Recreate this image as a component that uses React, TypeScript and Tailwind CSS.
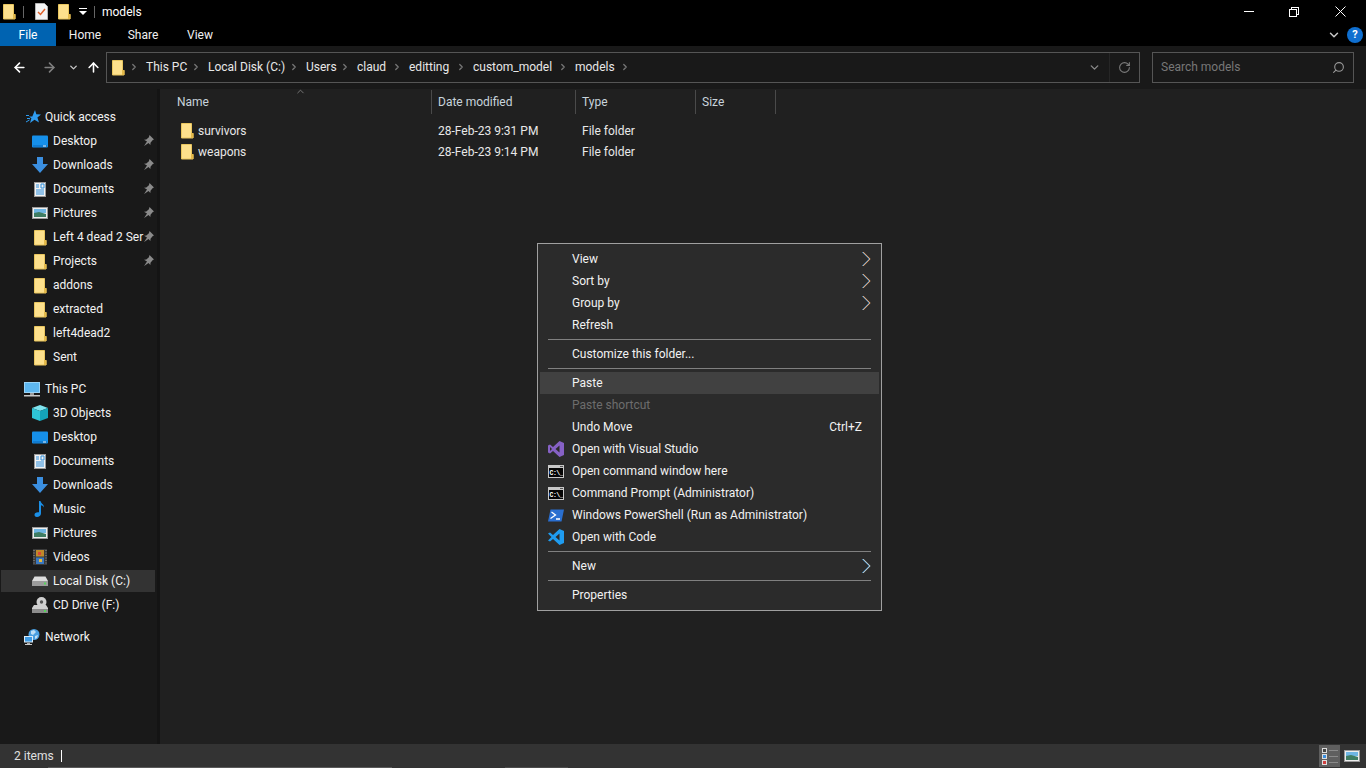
import React from 'react';
import { ArrowLeft, ArrowRight, ArrowUp, ChevronDown, ChevronRight, ChevronUp, RotateCw, Search } from 'lucide-react';

const Folder = ({ className = '' }: { className?: string }) => (
  <svg width="14" height="17" viewBox="0 0 14 17" className={className}>
    <path d="M1.5 1.5h10v10h1.5v4.5H1.5z" fill="#fde08c" stroke="#e9c65f" />
    <path d="M11 11h2.5v5H11z" fill="#e3b94a" />
  </svg>
);

const Pin = () => (
  <svg width="11" height="11" viewBox="0 0 11 11">
    <path d="M6.500 0l4.500 4.500-1.200.6-2.300 2.600-.1 2.300-1.900-1.900-4.500 3 3-4.500L1 4.700l2.300-.1L5.900 2.300z" fill="#8a8a8a" />
  </svg>
);

const Desktop = () => (
  <svg width="16" height="13" viewBox="0 0 16 13">
    <rect x="0" y="0.5" width="16" height="12" rx="1" fill="#1690ea" />
    <rect x="1" y="10.5" width="14" height="1" fill="#0a66b8" />
    <rect x="11" y="10.5" width="3" height="1" fill="#e6f3ff" />
  </svg>
);

const Download = () => (
  <svg width="16" height="16" viewBox="0 0 16 16">
    <path d="M5 0h6v7h5l-8 9-8-9h5z" fill="#3b8fe0" />
  </svg>
);

const Documents = () => (
  <svg width="12" height="15" viewBox="0 0 12 15">
    <rect x="0.5" y="0.5" width="11" height="14" fill="#f2f2f2" stroke="#9a9a9a" />
    <path d="M2 3h3M2 5h3M7 2h3v4H7zM2 8h8M2 10h8M2 12h8" stroke="#2f8fdc" fill="none" />
  </svg>
);

const Pictures = () => (
  <svg width="16" height="12" viewBox="0 0 16 12">
    <rect x="0.5" y="0.5" width="15" height="11" fill="#eeeeee" stroke="#9a9a9a" />
    <rect x="2" y="2" width="12" height="4" fill="#6fb6e4" />
    <path d="M2 6l5-1 7 2v3H2z" fill="#3f7d63" />
  </svg>
);

const Cube = () => (
  <svg width="16" height="16" viewBox="0 0 16 16">
    <path d="M8 0l8 3-8 3-8-3z" fill="#7fe3ee" />
    <path d="M0 3l8 3v10l-8-3z" fill="#2ec4d6" />
    <path d="M16 3L8 6v10l8-3z" fill="#14a3b8" />
  </svg>
);

const Music = () => (
  <svg width="12" height="16" viewBox="0 0 12 16">
    <path d="M5 0h1.500c.3 2.500 3.500 3 3.500 6.500-.8-1.500-2-2-3-2.200V12.500C7 14.500 5 16 3 16s-2.500-1.200-2.500-2.300C.5 12 2.500 10.800 5 11.300z" fill="#1b8fe6" />
  </svg>
);

const Videos = () => (
  <svg width="14" height="16" viewBox="0 0 14 16">
    <rect width="14" height="16" fill="#3a3a3a" />
    <rect x="3" y="1" width="8" height="6.500" fill="#c08a2a" />
    <rect x="3" y="8.500" width="8" height="6.500" fill="#3a78c0" />
    <rect x="5" y="3" width="3" height="3" fill="#d9483a" />
    <rect x="6" y="10" width="3" height="3" fill="#e6b93a" />
    <path d="M1 1v14M13 1v14" stroke="#999" strokeDasharray="1 1.500" />
  </svg>
);

const Drive = () => (
  <svg width="16" height="10" viewBox="0 0 16 10">
    <path d="M2.500 0.500h11L16 5v5H0V5z" fill="#dcdcdc" />
    <rect x="0" y="5" width="16" height="5" fill="#9c9c9c" />
    <rect x="12" y="6.500" width="2" height="2" fill="#55d35a" />
  </svg>
);

const CdDrive = () => (
  <svg width="16" height="16" viewBox="0 0 16 16">
    <circle cx="9.500" cy="5" r="5" fill="#d0d0d0" />
    <circle cx="9.500" cy="5" r="1.700" fill="#555" />
    <path d="M2 8h12l2 3v5H0v-5z" fill="#cfcfcf" />
    <rect x="0" y="12" width="16" height="4" fill="#8c8c8c" />
    <rect x="12" y="13" width="2" height="2" fill="#55d35a" />
  </svg>
);

const ThisPc = () => (
  <svg width="16" height="15" viewBox="0 0 16 15">
    <rect x="0" y="0" width="16" height="11" fill="#9ad4f7" />
    <rect x="1" y="1" width="14" height="9" fill="#5db7f0" />
    <rect x="6" y="11" width="4" height="2" fill="#9a9a9a" />
    <rect x="0" y="13" width="16" height="1.500" fill="#c8c8c8" />
  </svg>
);

const Network = () => (
  <svg width="16" height="16" viewBox="0 0 16 16">
    <circle cx="10" cy="5.500" r="5.500" fill="#4a9fe0" />
    <path d="M7 2l3-1 2 2-3 3-2-1zM11 7l3-1-1 3-2 1z" fill="#bfe0f5" />
    <rect x="0" y="7" width="9" height="6.500" fill="#dcecf8" />
    <rect x="1" y="8" width="7" height="4.500" fill="#3f9be4" />
    <rect x="3" y="14" width="3" height="1" fill="#aaa" />
    <rect x="1" y="15" width="7" height="1" fill="#ccc" />
  </svg>
);

const Star = () => (
  <svg width="15" height="14" viewBox="0 0 15 14">
    <path d="M9 0l1.300 4.200L15 4.400l-3.600 3L13 12.500 8.500 9.800 4 13l1.400-4.700-2.400-1.800h3.300z" fill="#2f9cf0" />
    <path d="M0 5.500h3M1 8.500h3M0 12l3.500-2" stroke="#2f9cf0" />
  </svg>
);

const DocCheck = ({ className = '' }: { className?: string }) => (
  <svg width="13" height="17" viewBox="0 0 13 17" className={className}>
    <path d="M0.500 0.500h9l3 3v13H0.500z" fill="#f4f4f4" stroke="#b5b5b5" />
    <path d="M3 9l2.500 2.500L10 6" stroke="#e0622c" strokeWidth="1.500" fill="none" />
  </svg>
);

const Cmd = () => (
  <svg width="16" height="13" viewBox="0 0 16 13">
    <rect width="16" height="13" fill="#c8c8c8" />
    <rect x="12" y="1" width="3" height="1" fill="#555" />
    <rect x="1" y="3" width="14" height="9" fill="#050505" />
    <text x="1.500" y="10" fontSize="6.500" fontWeight="700" fill="#ffffff" fontFamily="'Liberation Mono', monospace" letterSpacing="-0.500">C:\_</text>
  </svg>
);

const PowerShell = () => (
  <svg width="16" height="13" viewBox="0 0 16 13">
    <path d="M2.500 0.500H16L13.500 12.500H0z" fill="#2a6fd0" />
    <path d="M3.500 3l4 3-5 3.500M8 10h4" stroke="#ffffff" strokeWidth="1.300" fill="none" />
  </svg>
);

const VisualStudio = () => (
  <svg width="16" height="16" viewBox="0 0 16 16">
    <path d="M11.500 0L16 2v12l-4.500 2L5 10l-3 2.500L0 11.500v-7L2 3.500 5 6zM2 6v4l2-2zM11.500 4.500L7.500 8l4 3.500z" fill="#8661c5" fillRule="evenodd" />
  </svg>
);

const VsCode = () => (
  <svg width="16" height="16" viewBox="0 0 16 16">
    <path d="M11.500 0L16 2v12l-4.500 2L5 10l-3 2.500L0 11.500 3.500 8 0 4.500 2 3.500 5 6zM11.500 4.500L7.500 8l4 3.500z" fill="#1f9cf0" fillRule="evenodd" />
  </svg>
);

const quickItems = [
  { name: 'Desktop', icon: <Desktop />, pin: true },
  { name: 'Downloads', icon: <Download />, pin: true },
  { name: 'Documents', icon: <Documents />, pin: true },
  { name: 'Pictures', icon: <Pictures />, pin: true },
  { name: 'Left 4 dead 2 Ser', icon: <Folder />, pin: true },
  { name: 'Projects', icon: <Folder />, pin: true },
  { name: 'addons', icon: <Folder /> },
  { name: 'extracted', icon: <Folder /> },
  { name: 'left4dead2', icon: <Folder /> },
  { name: 'Sent', icon: <Folder /> },
];

const pcItems = [
  { name: '3D Objects', icon: <Cube /> },
  { name: 'Desktop', icon: <Desktop /> },
  { name: 'Documents', icon: <Documents /> },
  { name: 'Downloads', icon: <Download /> },
  { name: 'Music', icon: <Music /> },
  { name: 'Pictures', icon: <Pictures /> },
  { name: 'Videos', icon: <Videos /> },
  { name: 'Local Disk (C:)', icon: <Drive />, selected: true },
  { name: 'CD Drive (F:)', icon: <CdDrive /> },
];

const crumbs = [
  { name: 'This PC', width: 'w-[62px]' },
  { name: 'Local Disk (C:)', width: 'w-[98px]' },
  { name: 'Users', width: 'w-[51px]' },
  { name: 'claud', width: 'w-[52px]' },
  { name: 'editting', width: 'w-[64px]' },
  { name: 'custom_model', width: 'w-[102px]' },
  { name: 'models', width: 'w-[62px]' },
];

const SideRow = ({ item }: { item: { name: string; icon: React.ReactNode; pin?: boolean; selected?: boolean } }) => (
  <div className="h-6 pl-[1px] pr-[2px] flex items-center">
    <div className={`h-[22px] flex-1 flex items-center pl-[31px] relative ${item.selected ? 'bg-[#333333]' : ''}`}>
      <span className="w-[22px] shrink-0 flex items-center justify-center -ml-[1px] pr-[5px]">{item.icon}</span>
      <span className="text-[#f2f2f2] whitespace-nowrap">{item.name}</span>
      {item.pin && (
        <span className="absolute right-[1px] top-[5px]">
          <Pin />
        </span>
      )}
    </div>
  </div>
);

const Arrow = ({ warm }: { warm?: boolean }) => (
  <svg width="9" height="16" viewBox="0 0 9 16" className="ml-auto">
    <path d="M0.400 1l7 7-7 7" stroke="#3f9fe6" fill="none" />
    <path d="M1.200 1l7 7-7 7" stroke={warm ? '#f09a58' : '#b8c8c8'} fill="none" />
    <path d="M0.800 1l7 7-7 7" stroke="#f4e8dc" fill="none" strokeOpacity="0.450" strokeWidth="0.700" />
  </svg>
);

const MenuRow = ({ label, icon, hint, arrow, warm, disabled, active }: {
  label: string; icon?: React.ReactNode; hint?: string; arrow?: boolean; warm?: boolean; disabled?: boolean; active?: boolean;
}) => (
  <div className={`h-[22px] mx-[2px] pl-[8px] pr-[8px] flex items-center ${active ? 'bg-[#414141]' : ''}`}>
    <span className="w-4 h-4 flex items-center justify-center shrink-0">{icon}</span>
    <span className={`ml-2 ${disabled ? 'text-[#6d6d6d]' : 'text-[#f2f2f2]'}`}>{label}</span>
    {hint && <span className="ml-auto mr-[9px] text-[#f2f2f2]">{hint}</span>}
    {arrow && <Arrow warm={warm} />}
  </div>
);

const MenuLine = () => (
  <div className="h-[7px] flex items-center mx-[10px]">
    <div className="h-px w-full bg-[#808080]" />
  </div>
);

const ContextMenu = () => (
  <div className="absolute left-[537px] top-[243px] w-[345px] border border-[#a0a0a0] bg-[#2b2b2b] py-1">
    <MenuRow label="View" arrow warm />
    <MenuRow label="Sort by" arrow warm />
    <MenuRow label="Group by" arrow warm />
    <MenuRow label="Refresh" />
    <MenuLine />
    <MenuRow label="Customize this folder..." />
    <MenuLine />
    <MenuRow label="Paste" active />
    <MenuRow label="Paste shortcut" disabled />
    <MenuRow label="Undo Move" hint="Ctrl+Z" />
    <MenuRow label="Open with Visual Studio" icon={<VisualStudio />} />
    <MenuRow label="Open command window here" icon={<Cmd />} />
    <MenuRow label="Command Prompt (Administrator)" icon={<Cmd />} />
    <MenuRow label="Windows PowerShell (Run as Administrator)" icon={<PowerShell />} />
    <MenuRow label="Open with Code" icon={<VsCode />} />
    <MenuLine />
    <MenuRow label="New" arrow />
    <MenuLine />
    <MenuRow label="Properties" />
  </div>
);

const HeaderCell = ({ label, width }: { label: string; width: string }) => (
  <div className={`${width} h-6 flex items-center pl-[6px] border-r border-[#4a4a4a] text-[#c8d4dc]`}>{label}</div>
);

const FileRow = ({ name, date }: { name: string; date: string }) => (
  <div className="h-[21px] flex items-center text-[#e8e8e8]">
    <div className="w-[272px] pl-[20px] flex items-center">
      <Folder />
      <span className="ml-[4px]">{name}</span>
    </div>
    <div className="w-[144px] pl-[6px]">{date}</div>
    <div className="pl-[6px]">File folder</div>
  </div>
);

export default function App() {
  return (
    <div className="relative w-[1366px] h-[768px] overflow-hidden flex flex-col bg-black text-[12px] leading-4 text-white font-['Roboto',sans-serif]">
      {/* title bar */}
      <div className="h-[23px] flex items-center shrink-0">
        <Folder className="ml-[2px]" />
        <div className="ml-[7px] w-px h-3 bg-[#666]" />
        <DocCheck className="ml-[11px]" />
        <Folder className="ml-[9px]" />
        <div className="ml-2 w-2 flex flex-col items-center gap-[2px]">
          <div className="w-[8px] h-px bg-white" />
          <div className="w-0 h-0 border-l-4 border-r-4 border-t-4 border-l-transparent border-r-transparent border-t-white" />
        </div>
        <div className="ml-[7px] w-px h-3 bg-[#666]" />
        <span className="ml-[7px]">models</span>
        <div className="ml-auto flex items-center">
          <div className="w-[10px] h-px bg-white mr-[35px]" />
          <div className="relative w-[10px] h-[10px] mr-[36px]">
            <div className="absolute right-0 top-0 w-2 h-2 border border-white" />
            <div className="absolute left-0 bottom-0 w-2 h-2 border border-white bg-black" />
          </div>
          <svg width="11" height="11" viewBox="0 0 11 11" className="mr-[20px]">
            <path d="M0.500 0.500l10 10M10.500 0.500l-10 10" stroke="#fff" />
          </svg>
        </div>
      </div>

      {/* ribbon tabs */}
      <div className="h-[23px] flex items-stretch shrink-0">
        <div className="w-14 bg-[#0063b1] flex items-center justify-center">File</div>
        <div className="w-[58px] flex items-center justify-center text-[#f0f0f0]">Home</div>
        <div className="w-[58px] flex items-center justify-center text-[#f0f0f0]">Share</div>
        <div className="w-[56px] flex items-center justify-center text-[#f0f0f0]">View</div>
        <div className="ml-auto flex items-center pr-[3px]">
          <ChevronDown size={14} strokeWidth={2.500} className="text-[#c8c8c8] mr-[6px]" />
          <div className="w-4 h-4 rounded-full bg-[#0f6fd0] flex items-center justify-center text-[11px] font-bold">?</div>
        </div>
      </div>

      {/* address row */}
      <div className="h-[43px] bg-[#191919] flex items-center shrink-0">
        <ArrowLeft size={15} strokeWidth={2.500} className="ml-[12px] text-white" />
        <ArrowRight size={15} strokeWidth={2.500} className="ml-[15px] text-[#808080]" />
        <ChevronDown size={11} strokeWidth={3} className="ml-[11px] text-[#c8c8c8]" />
        <ArrowUp size={15} strokeWidth={2.500} className="ml-[7px] text-white" />
        <div className="ml-[5px] w-[1034px] h-[31px] border border-[#555] flex items-center">
          <Folder className="ml-[4px] shrink-0" />
          <div className="flex items-center ml-[4px] pb-[1px]">
            {crumbs.map(c => (
              <div key={c.name} className={`${c.width} flex items-center text-[#e8e8e8] whitespace-nowrap`}>
                <ChevronRight size={10} strokeWidth={3} className="text-[#777] mr-[7px] shrink-0" />
                {c.name}
              </div>
            ))}
            <ChevronRight size={10} strokeWidth={3} className="text-[#777]" />
          </div>
          <div className="ml-auto flex items-center h-full">
            <ChevronDown size={13} strokeWidth={2.500} className="text-[#8a8a8a] mr-[8px]" />
            <div className="w-[30px] h-full border-l border-[#262626] flex items-center justify-center">
              <RotateCw size={13} strokeWidth={2} className="text-[#7a7a7a]" />
            </div>
          </div>
        </div>
        <div className="ml-3 w-[202px] h-[31px] border border-[#555] flex items-center pl-2 pr-2 pb-[1px] text-[#777]">
          Search models
          <Search size={13} strokeWidth={2} className="ml-auto text-[#999] -scale-x-100" />
        </div>
      </div>

      {/* main */}
      <div className="flex-1 flex min-h-0">
        <div className="w-[157px] bg-[#191919] pt-4 shrink-0">
          <div className="h-6 flex items-center pl-[26px] text-[#f2f2f2]">
            <Star />
            <span className="ml-[4px]">Quick access</span>
          </div>
          {quickItems.map(i => <SideRow key={i.name} item={i} />)}
          <div className="h-6 mt-2 flex items-center pl-6 text-[#f2f2f2]">
            <ThisPc />
            <span className="ml-[5px]">This PC</span>
          </div>
          {pcItems.map(i => <SideRow key={i.name} item={i} />)}
          <div className="h-6 mt-2 flex items-center pl-6 text-[#f2f2f2]">
            <Network />
            <span className="ml-[5px]">Network</span>
          </div>
        </div>
        <div className="w-[3px] bg-[#141414] shrink-0" />
        <div className="flex-1 bg-[#202020] relative">
          <div className="flex h-6 mt-px">
            <HeaderCell label="" width="w-[272px]" />
            <HeaderCell label="Date modified" width="w-[144px]" />
            <HeaderCell label="Type" width="w-[120px]" />
            <HeaderCell label="Size" width="w-[80px]" />
          </div>
          <span className="absolute left-[17px] top-[5px] text-[#c8d4dc]">Name</span>
          <ChevronUp size={11} strokeWidth={1.500} className="absolute left-[135px] -top-[3px] text-[#999]" />
          <div className="pt-[6px]">
            <FileRow name="survivors" date="28-Feb-23 9:31 PM" />
            <FileRow name="weapons" date="28-Feb-23 9:14 PM" />
          </div>
        </div>
      </div>

      {/* status bar */}
      <div className="h-6 bg-[#333333] flex items-center shrink-0 text-[#e0e0e0]">
        <span className="ml-[14px]">2 items</span>
        <div className="ml-[7px] w-px h-3 bg-white" />
        <div className="ml-auto flex items-center h-full mr-[3px]">
          <div className="w-[21px] h-[22px] bg-[#5f5f5f] flex flex-col justify-center gap-[1px] pl-[3px]">
            {['bg-[#444]', 'bg-[#3a8fe0]', 'bg-[#d04040]'].map(c => (
              <div key={c} className="flex items-center gap-[2px]">
                <div className={`w-[5px] h-[5px] border border-[#ddd] ${c}`} />
                <div className="w-[9px] h-px bg-[#8a8a8a]" />
              </div>
            ))}
          </div>
          <span className="ml-1 mr-[3px]"><Pictures /></span>
        </div>
      </div>

      {/* taskbar edge peeking in under the status bar */}
      <div className="absolute left-[48px] bottom-0 w-[344px] h-px bg-[#5a5a5a]" />
      <div className="absolute left-[505px] bottom-0 w-[63px] h-px bg-[#4c4c4c]" />

      <ContextMenu />
    </div>
  );
}
